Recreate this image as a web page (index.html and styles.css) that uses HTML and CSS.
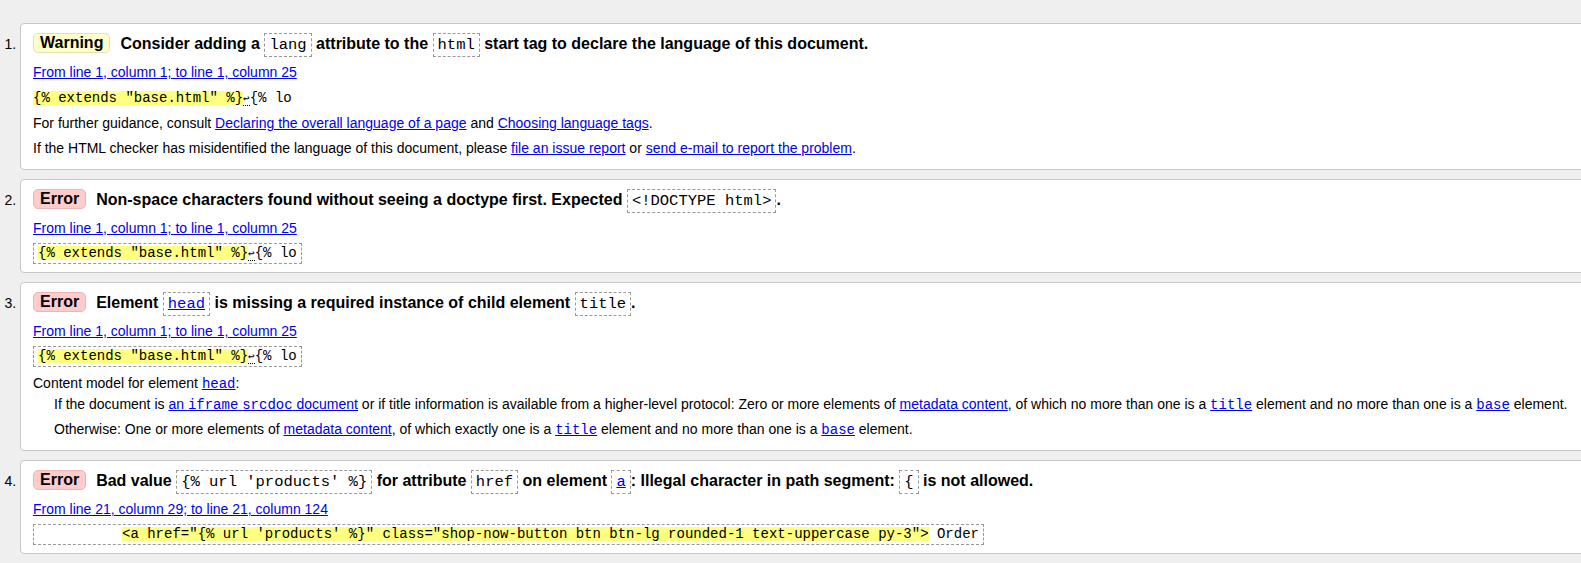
FILE: index.html
```html
<!DOCTYPE html>
<html lang="en">
<head>
<meta charset="utf-8">
<title>Validator results</title>
<link rel="stylesheet" href="styles.css">
</head>
<body>
<ol class="results">
  <li class="msg">
    <p class="msg-head"><strong class="badge badge-warning">Warning</strong><span>Consider adding a <code class="tag">lang</code> attribute to the <code class="tag">html</code> start tag to declare the language of this document.</span></p>
    <p><a href="#">From line 1, column 1; to line 1, column 25</a></p>
    <p class="extract"><code><b>{% extends "base.html" %}</b><span class="lf">↩</span>{% lo</code></p>
    <p>For further guidance, consult <a href="#">Declaring the overall language of a page</a> and <a href="#">Choosing language tags</a>.</p>
    <p>If the HTML checker has misidentified the language of this document, please <a href="#">file an issue report</a> or <a href="#">send e-mail to report the problem</a>.</p>
  </li>
  <li class="msg">
    <p class="msg-head"><strong class="badge badge-error">Error</strong><span>Non-space characters found without seeing a doctype first. Expected <code class="tag">&lt;!DOCTYPE html&gt;</code>.</span></p>
    <p><a href="#">From line 1, column 1; to line 1, column 25</a></p>
    <p class="extract boxed"><code><b>{% extends "base.html" %}</b><span class="lf">↩</span>{% lo</code></p>
  </li>
  <li class="msg">
    <p class="msg-head"><strong class="badge badge-error">Error</strong><span>Element <code class="tag"><a href="#">head</a></code> is missing a required instance of child element <code class="tag">title</code>.</span></p>
    <p><a href="#">From line 1, column 1; to line 1, column 25</a></p>
    <p class="extract boxed"><code><b>{% extends "base.html" %}</b><span class="lf">↩</span>{% lo</code></p>
    <p class="model-intro">Content model for element <a href="#"><code class="mono">head</code></a>:</p>
    <div class="model">
      <p>If the document is <a href="#">an <code class="mono">iframe</code> <code class="mono">srcdoc</code> document</a> or if title information is available from a higher-level protocol: Zero or more elements of <a href="#">metadata content</a>, of which no more than one is a <a href="#"><code class="mono">title</code></a> element and no more than one is a <a href="#"><code class="mono">base</code></a> element.</p>
      <p>Otherwise: One or more elements of <a href="#">metadata content</a>, of which exactly one is a <a href="#"><code class="mono">title</code></a> element and no more than one is a <a href="#"><code class="mono">base</code></a> element.</p>
    </div>
  </li>
  <li class="msg">
    <p class="msg-head"><strong class="badge badge-error">Error</strong><span>Bad value <code class="tag">{% url 'products' %}</code> for attribute <code class="tag">href</code> on element <code class="tag"><a href="#">a</a></code>: Illegal character in path segment: <code class="tag">{</code> is not allowed.</span></p>
    <p><a href="#">From line 21, column 29; to line 21, column 124</a></p>
    <p class="extract boxed"><code>          <b>&lt;a href="{% url 'products' %}" class="shop-now-button btn btn-lg rounded-1 text-uppercase py-3"&gt;</b> Order</code></p>
  </li>
</ol>
</body>
</html>
```

FILE: styles.css
```css
html {
  overflow: hidden;
}

body {
  margin: 0;
  background: #efefef;
  color: #000;
  font-family: "Liberation Sans", Arial, Helvetica, sans-serif;
  font-size: 14px;
}

.results {
  margin: 23px -40px 0 20px;
  padding: 0;
}

.msg {
  background: #fff;
  border: 1px solid #c8c8c8;
  border-radius: 4px;
  padding: 5px 12px 8px;
  margin-bottom: 9px;
}

.msg p {
  margin: 0;
  line-height: 25px;
}

.msg a {
  color: #0000ee;
}

.msg .msg-head {
  line-height: 30px;
  font-size: 16px;
  font-weight: bold;
}

.badge {
  display: inline-block;
  line-height: 18px;
  padding: 0 6px;
  margin-right: 10px;
  border-radius: 5px;
  vertical-align: 1px;
}

.badge-warning {
  background: #ffffcc;
  border: 1px solid #e2e2ae;
}

.badge-error {
  background: #ffcccc;
  border: 1px solid #ecb4b4;
}

.tag {
  font-family: "Liberation Mono", "Courier New", monospace;
  font-size: 15.5px;
  font-weight: normal;
  border: 1px dashed #999;
  padding: 2px 4px;
}

.mono {
  font-family: "Liberation Mono", "Courier New", monospace;
  font-size: 14px;
  line-height: 1;
}

.extract code {
  font-family: "Liberation Mono", "DejaVu Sans Mono", monospace;
  font-size: 14px;
  white-space: pre;
}

.extract.boxed {
  line-height: 23px;
}

.extract.boxed code {
  display: inline-block;
  border: 1px dashed #999;
  padding: 2px 4px;
  line-height: 15px;
  vertical-align: middle;
}

.extract b {
  font-weight: normal;
  background: linear-gradient(transparent 1px, #ffff80 1px, #ffff80 calc(100% - 1px), transparent calc(100% - 1px));
}

.lf {
  font-family: "DejaVu Sans Mono", monospace;
  font-size: 11px;
  border-bottom: 1px dotted #000;
}

.msg .model-intro {
  margin-top: 4px;
}

.model {
  margin: -4px 0 0 21px;
}
```
